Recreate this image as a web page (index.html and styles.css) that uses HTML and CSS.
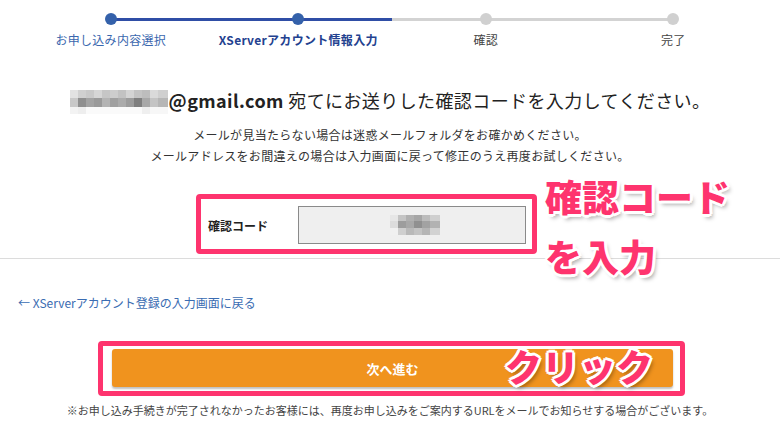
FILE: index.html
```html
<!DOCTYPE html>
<html lang="ja">
<head>
  <meta charset="UTF-8">
  <title>確認コード入力</title>
  <link rel="stylesheet" href="styles.css">
</head>
<body>
  <div class="steps">
    <div class="step done">
      <div class="dot"></div>
      <div class="step-label">お申し込み内容選択</div>
    </div>
    <div class="step current">
      <div class="dot"></div>
      <div class="step-label">XServerアカウント情報入力</div>
    </div>
    <div class="step half">
      <div class="dot"></div>
      <div class="step-label">確認</div>
    </div>
    <div class="step">
      <div class="dot"></div>
      <div class="step-label">完了</div>
    </div>
  </div>

  <h1 class="lead">
    <svg class="blur-mail" width="98" height="24" viewBox="0 0 98 24">
      <rect x="0" y="0" width="8" height="8" fill="#e2e2e2"/>
      <rect x="8" y="0" width="8" height="8" fill="#d0d0d0"/>
      <rect x="16" y="0" width="8" height="8" fill="#c9c9c9"/>
      <rect x="24" y="0" width="8" height="8" fill="#d6d6d6"/>
      <rect x="32" y="0" width="8" height="8" fill="#c6c6c6"/>
      <rect x="40" y="0" width="8" height="8" fill="#cdcdcd"/>
      <rect x="48" y="0" width="8" height="8" fill="#c2c2c2"/>
      <rect x="56" y="0" width="8" height="8" fill="#d4d4d4"/>
      <rect x="64" y="0" width="8" height="8" fill="#c4c4c4"/>
      <rect x="72" y="0" width="8" height="8" fill="#bdbdbd"/>
      <rect x="80" y="0" width="8" height="8" fill="#dadada"/>
      <rect x="88" y="0" width="10" height="8" fill="#cfcfcf"/>
      <rect x="0" y="8" width="8" height="9" fill="#c8c8c8"/>
      <rect x="8" y="8" width="8" height="9" fill="#8f8f8f"/>
      <rect x="16" y="8" width="8" height="9" fill="#a3a3a3"/>
      <rect x="24" y="8" width="8" height="9" fill="#9a9a9a"/>
      <rect x="32" y="8" width="8" height="9" fill="#b4b4b4"/>
      <rect x="40" y="8" width="8" height="9" fill="#a0a0a0"/>
      <rect x="48" y="8" width="8" height="9" fill="#ababab"/>
      <rect x="56" y="8" width="8" height="9" fill="#9c9c9c"/>
      <rect x="64" y="8" width="8" height="9" fill="#7f7f7f"/>
      <rect x="72" y="8" width="8" height="9" fill="#a8a8a8"/>
      <rect x="80" y="8" width="8" height="9" fill="#c4c4c4"/>
      <rect x="88" y="8" width="10" height="9" fill="#b6b6b6"/>
      <rect x="0" y="17" width="8" height="7" fill="#f3f3f3"/>
      <rect x="8" y="17" width="8" height="7" fill="#eeeeee"/>
      <rect x="16" y="17" width="56" height="7" fill="#fafafa"/>
      <rect x="72" y="17" width="8" height="7" fill="#efefef"/>
      <rect x="80" y="17" width="18" height="7" fill="#f7f7f7"/>
    </svg><b>@gmail.com</b> 宛てにお送りした確認コードを入力してください。
  </h1>

  <p class="note">メールが見当たらない場合は迷惑メールフォルダをお確かめください。<br>メールアドレスをお間違えの場合は入力画面に戻って修正のうえ再度お試しください。</p>

  <div class="code-box">
    <label class="code-label" for="code">確認コード</label>
    <div class="code-input" id="code">
      <svg width="50" height="20" viewBox="0 0 50 20">
        <rect x="0" y="0" width="8" height="6" fill="#e6e6e6"/>
        <rect x="8" y="0" width="8" height="6" fill="#c4c4c4"/>
        <rect x="16" y="0" width="8" height="6" fill="#b0b0b0"/>
        <rect x="24" y="0" width="8" height="6" fill="#a6a6a6"/>
        <rect x="32" y="0" width="8" height="6" fill="#bcbcbc"/>
        <rect x="40" y="0" width="10" height="6" fill="#cfcfcf"/>
        <rect x="0" y="6" width="8" height="7" fill="#dcdcdc"/>
        <rect x="8" y="6" width="8" height="7" fill="#9d9d9d"/>
        <rect x="16" y="6" width="8" height="7" fill="#a8a8a8"/>
        <rect x="24" y="6" width="8" height="7" fill="#909090"/>
        <rect x="32" y="6" width="8" height="7" fill="#a2a2a2"/>
        <rect x="40" y="6" width="10" height="7" fill="#b2b2b2"/>
        <rect x="0" y="13" width="8" height="7" fill="#f0f0f0"/>
        <rect x="8" y="13" width="8" height="7" fill="#cfcfcf"/>
        <rect x="16" y="13" width="8" height="7" fill="#b9b9b9"/>
        <rect x="24" y="13" width="8" height="7" fill="#c3c3c3"/>
        <rect x="32" y="13" width="8" height="7" fill="#b5b5b5"/>
        <rect x="40" y="13" width="10" height="7" fill="#d2d2d2"/>
      </svg>
    </div>
  </div>

  <hr class="rule">

  <a class="back" href="#">← XServerアカウント登録の入力画面に戻る</a>

  <div class="btn-box">
    <button class="next" type="button">次へ進む</button>
  </div>

  <p class="foot">※お申し込み手続きが完了されなかったお客様には、再度お申し込みをご案内するURLをメールでお知らせする場合がございます。</p>

  <div class="memo memo-code">確認コード<br>を入力</div>
  <div class="memo memo-click">クリック</div>
</body>
</html>
```

FILE: styles.css
```css
body {
  margin: 0;
  font-family: "Noto Sans CJK JP", "Noto Sans", sans-serif;
  color: #222;
  background: #fff;
  position: relative;
  width: 780px;
  height: 442px;
  overflow: hidden;
}

/* steps */
.steps {
  display: grid;
  grid-template-columns: repeat(4, 1fr);
  width: 750px;
  margin-left: 17px;
  padding-top: 13px;
}
.step {
  position: relative;
  text-align: center;
}
.step + .step::before {
  content: '';
  position: absolute;
  top: 4.5px;
  left: -50%;
  width: 100%;
  height: 3px;
  background: #d3d3d3;
}
.step.current::before {
  background: #2f4ea6;
}
.step.half::before {
  background: linear-gradient(to right, #2f4ea6 50%, #d3d3d3 50%);
}
.dot {
  position: relative;
  z-index: 1;
  width: 12px;
  height: 12px;
  margin: 0 auto;
  border-radius: 50%;
  background: #d0d0d0;
}
.done .dot, .current .dot {
  background: #3461aa;
}
.step-label {
  margin-top: 7px;
  font-size: 12px;
  line-height: 16px;
  letter-spacing: 0.3px;
  color: #444;
}
.done .step-label {
  color: #3a67ae;
}
.current .step-label {
  color: #23418f;
  font-weight: bold;
}

/* lead text */
.lead {
  margin: 39px 0 0;
  font-size: 18px;
  font-weight: normal;
  line-height: 26px;
  letter-spacing: 0.4px;
  text-align: center;
  color: #222;
  white-space: nowrap;
}
.lead b {
  font-weight: bold;
}
.blur-mail {
  vertical-align: -6px;
  margin-right: 1px;
}
.note {
  margin: 10px 0 0;
  font-size: 12px;
  line-height: 21px;
  letter-spacing: 0.3px;
  text-align: center;
  color: #333;
}

/* code input */
.code-box {
  display: flex;
  align-items: center;
  box-sizing: border-box;
  width: 341px;
  height: 60px;
  margin: 28px 0 0 196px;
  padding: 2px 6px 0 7px;
  border: 5px solid #fe346e;
  border-radius: 4px;
}
.code-label {
  width: 90px;
  font-size: 12px;
  font-weight: bold;
  color: #222;
}
.code-input {
  display: flex;
  align-items: center;
  justify-content: center;
  box-sizing: border-box;
  width: 228px;
  height: 38px;
  padding-left: 6px;
  background: #efefef;
  border: 1px solid #8a8a8a;
}

.rule {
  margin: 4px 0 0;
  border: 0;
  border-top: 1px solid #dcdcdc;
}

.back {
  display: block;
  margin: 35px 0 0 18px;
  font-size: 12px;
  line-height: 18px;
  color: #3a6cb2;
  text-decoration: none;
}

/* next button */
.btn-box {
  box-sizing: border-box;
  width: 587px;
  height: 55px;
  margin: 29px 0 0 98px;
  padding: 3px 7px 0 9px;
  border: 5px solid #fe346e;
  border-radius: 4px;
}
.next {
  display: block;
  width: 561px;
  height: 38px;
  border: 0;
  border-radius: 3px;
  background: #f0931e;
  box-shadow: 0 2px 2px rgba(0,0,0,0.25);
  font-family: inherit;
  font-size: 13px;
  font-weight: bold;
  color: #fff;
}

.foot {
  margin: 6px 0 0;
  font-size: 11px;
  line-height: 16px;
  text-align: center;
  color: #444;
  white-space: nowrap;
}

/* annotations */
.memo {
  position: absolute;
  color: #fe346e;
  font-weight: 900;
  white-space: nowrap;
  text-shadow:
    3px 0 0 #fff, -3px 0 0 #fff, 0 3px 0 #fff, 0 -3px 0 #fff,
    2px 2px 0 #fff, -2px 2px 0 #fff, 2px -2px 0 #fff, -2px -2px 0 #fff,
    3px 4px 4px rgba(0,0,0,0.35);
}
.memo-code {
  left: 545px;
  top: 166px;
  font-size: 37px;
  line-height: 60px;
}
.memo-click {
  left: 505px;
  top: 345px;
  font-size: 37px;
  line-height: 42px;
}
```
